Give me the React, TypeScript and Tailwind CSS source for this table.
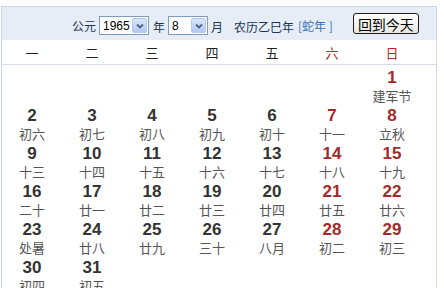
import type { ReactNode } from 'react'

type Day = { d: number; lunar: string }

const WEEKDAYS = ['一', '二', '三', '四', '五', '六', '日']

// August 1965 starts on a Sunday, so six blanks lead the first row
const DAYS: (Day | null)[] = [
  null, null, null, null, null, null,
  { d: 1, lunar: '建军节' },
  { d: 2, lunar: '初六' }, { d: 3, lunar: '初七' }, { d: 4, lunar: '初八' }, { d: 5, lunar: '初九' },
  { d: 6, lunar: '初十' }, { d: 7, lunar: '十一' }, { d: 8, lunar: '立秋' },
  { d: 9, lunar: '十三' }, { d: 10, lunar: '十四' }, { d: 11, lunar: '十五' }, { d: 12, lunar: '十六' },
  { d: 13, lunar: '十七' }, { d: 14, lunar: '十八' }, { d: 15, lunar: '十九' },
  { d: 16, lunar: '二十' }, { d: 17, lunar: '廿一' }, { d: 18, lunar: '廿二' }, { d: 19, lunar: '廿三' },
  { d: 20, lunar: '廿四' }, { d: 21, lunar: '廿五' }, { d: 22, lunar: '廿六' },
  { d: 23, lunar: '处暑' }, { d: 24, lunar: '廿八' }, { d: 25, lunar: '廿九' }, { d: 26, lunar: '三十' },
  { d: 27, lunar: '八月' }, { d: 28, lunar: '初二' }, { d: 29, lunar: '初三' },
  { d: 30, lunar: '初四' }, { d: 31, lunar: '初五' },
]

const cjk = "font-['Noto_Sans_CJK_SC','Noto_Sans',sans-serif]"

function Select({ value, width }: { value: string; width: string }) {
  return (
    <div className={`flex items-center h-[19px] ${width} border border-[#7f9db9] bg-white pl-[3px] pr-[1px]`}>
      <span className="flex-1 text-[12px] leading-none text-black font-['Liberation_Sans',sans-serif]">{value}</span>
      <span className="flex items-center justify-center w-[15px] h-[15px] rounded-[2px] border border-[#b4c8f0] bg-gradient-to-b from-[#dbe6fb] to-[#b3c9f3]">
        <svg width="8" height="6" viewBox="0 0 8 6">
          <path d="M1 1.5 L4 4.5 L7 1.5" fill="none" stroke="#4d6185" strokeWidth="1.8" />
        </svg>
      </span>
    </div>
  )
}

function Label({ children }: { children: ReactNode }) {
  return <span className={`${cjk} text-[12px] leading-none text-[#1e3553]`}>{children}</span>
}

export default function App() {
  return (
    <div className="w-[444px] h-[288px] overflow-hidden bg-white pt-[6px] pl-[1px]">
      <div className="w-[436px] border border-[#c9d7e6]">
        {/* year / month pickers */}
        <div className="flex items-center h-[33px] bg-[#e6edf7] pl-[70px] pt-[4px]">
          <Label>公元</Label>
          <div className="ml-[3px]"><Select value="1965" width="w-[50px]" /></div>
          <span className="ml-[4px]"><Label>年</Label></span>
          <div className="ml-[3px]"><Select value="8" width="w-[40px]" /></div>
          <span className="ml-[3px]"><Label>月</Label></span>
          <span className="ml-[11px]"><Label>农历乙巳年</Label></span>
          <span className={`${cjk} text-[12px] leading-none text-[#3a72b5] ml-[4px] whitespace-pre`}>[蛇年 ]</span>
          <button className={`${cjk} ml-[20px] mb-[4px] h-[21px] px-[4px] rounded-[3px] border border-[#1c1c1c] bg-gradient-to-b from-white to-[#e9e7df] text-[14px] leading-none text-black`}>
            回到今天
          </button>
        </div>

        <div className="grid grid-cols-[repeat(7,60px)] h-[25px] items-center border-b border-[#d4dde8] bg-white">
          {WEEKDAYS.map((w, i) => (
            <span key={w} className={`${cjk} text-center text-[13px] leading-none ${i >= 5 ? 'text-[#b02a2a]' : 'text-[#222]'}`}>
              {w}
            </span>
          ))}
        </div>

        <div className="grid grid-cols-[repeat(7,60px)] pt-[3px]">
          {DAYS.map((day, i) => (
            <div key={i} className="h-[38px] flex flex-col items-center">
              {day && (
                <>
                  <span className={`font-['Liberation_Sans',sans-serif] font-bold text-[17px] leading-[19px] ${i % 7 >= 5 ? 'text-[#a32a2a]' : 'text-[#333]'}`}>
                    {day.d}
                  </span>
                  <span className={`${cjk} text-[13px] leading-[17px] text-[#555]`}>{day.lunar}</span>
                </>
              )}
            </div>
          ))}
        </div>
      </div>
    </div>
  )
}
